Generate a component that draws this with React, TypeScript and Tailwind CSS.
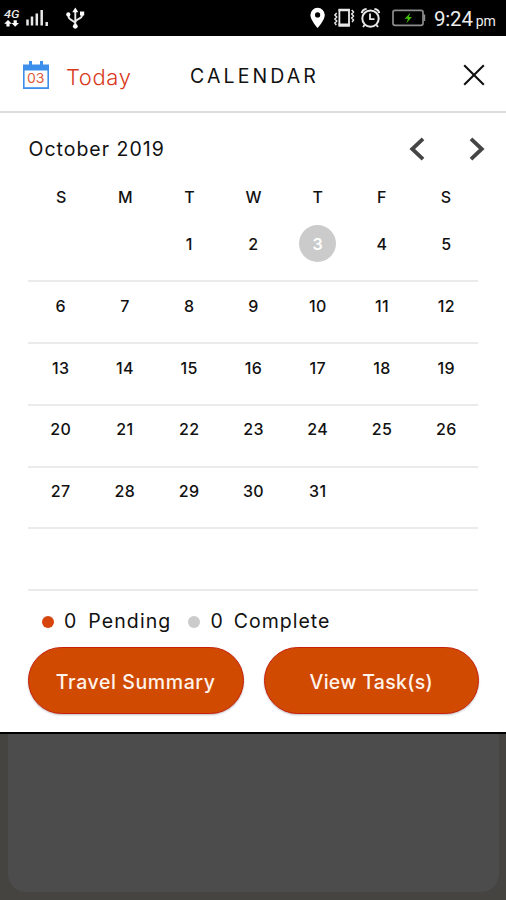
import clsx from 'clsx';

const WEEKDAYS = ['S', 'M', 'T', 'W', 'T', 'F', 'S'];

// October 2019 starts on a Tuesday; the grid always shows six weeks.
const FIRST_DAY = 2;
const DAYS_IN_MONTH = 31;
const SELECTED = 3;

const WEEKS = Array.from({ length: 6 }, (_, week) =>
  Array.from({ length: 7 }, (_, day) => {
    const n = week * 7 + day - FIRST_DAY + 1;
    return n > 0 && n <= DAYS_IN_MONTH ? n : null;
  }),
);

function StatusBar() {
  return (
    <div className="flex h-[35.5px] shrink-0 items-start justify-between bg-black text-white">
      <svg width="100" height="35" viewBox="0 0 100 35" fill="none" stroke="#e8e8e8">
        <text x="4" y="17.5" fontSize="11.5" fontWeight="500" fontStyle="italic" fill="#e8e8e8" stroke="none" textLength="15.5" lengthAdjust="spacingAndGlyphs" className="font-['Roboto',sans-serif]">
          4G
        </text>
        <path d="M8 20l3.8 3.8H9.6v2.8H6.4v-2.8H4.2zM15.2 26.8l3.8-3.8h-2.2v-2.8h-3.2V23h-2.2z" fill="#fff" stroke="none" />
        <path d="M27.5 19.5v6M32 16.5v9M36.8 13.5v12M41.7 10v15.5M46.7 22v4" strokeWidth="2.5" />
        <path d="M75.3 11v15M75.3 23.5c-1-4-7-2.5-7-8M75.3 22c1-4 7-2.5 7-7.5" strokeWidth="1.9" />
        <path d="M75.3 7.5l3 4.8h-6z" fill="#fff" stroke="none" />
        <circle cx="75.3" cy="26.3" r="2.4" fill="#fff" stroke="none" />
        <circle cx="68.3" cy="14.4" r="2.1" fill="#fff" stroke="none" />
        <path d="M80 11.5h4.2v4H80z" fill="#fff" stroke="none" />
      </svg>
      <div className="flex items-start">
        <svg width="124" height="35" viewBox="306 0 124 35" fill="none" stroke="#e8e8e8">
          <path d="M317.6 7.8a7.2 7.2 0 0 0-7.2 7.2c0 5 7.2 13 7.2 13s7.2-8 7.2-13a7.2 7.2 0 0 0-7.2-7.2zm0 4.5a2.6 2.6 0 1 1 0 5.2 2.6 2.6 0 0 1 0-5.2z" fill="#fff" stroke="none" />
          <path d="M339.4 10.2h9.6v15.6h-9.6z" strokeWidth="1.8" />
          <path d="M338.5 10h11.4M338.5 24.6h11.4" strokeWidth="2.4" />
          <path d="M336.7 13l-1.8 2 1.8 2-1.8 2 1.8 2-1.8 2 1.4 2M351.7 10l1.8 2-1.8 2 1.8 2-1.8 2 1.8 2-1.4 2" strokeWidth="1.5" />
          <circle cx="370.5" cy="18.6" r="8.2" strokeWidth="2" />
          <path d="M370 13.5v5.7h4.5" strokeWidth="1.8" />
          <path d="M361.8 13.2c.3-2.2 2.2-4 4.8-4.2M379.2 13.2c-.3-2.2-2.2-4-4.8-4.2M364.6 25l-1.6 2M376.4 25l1.6 2" strokeWidth="2" />
          <rect x="393" y="10.3" width="30" height="15" rx="2" stroke="#8c8c8c" strokeWidth="1.7" />
          <path d="M424.3 14.5v6.5" stroke="#8c8c8c" strokeWidth="1.8" />
          <path d="M410.5 12.8l-5.8 6h3.3l-1.6 4.4 5.5-6.2h-3.2z" fill="#3fc500" stroke="none" />
        </svg>
        <p className="w-[76px] pt-[4px] pl-[4px] font-['Roboto',sans-serif] text-[20.5px] leading-[30px] whitespace-nowrap text-[#ededed]">
          <span className="tracking-[-0.2px]">9:24</span>
          <span className="ml-[3px] text-[14px]">pm</span>
        </p>
      </div>
    </div>
  );
}

function CalendarIcon() {
  return (
    <svg width="28" height="30" viewBox="0 0 28 30" className="shrink-0">
      <path d="M1 4.5h26v24.5H1z" fill="#3c8fea" />
      <path d="M7 1h3v5H7zM18 1h3v5h-3z" fill="#3c8fea" />
      <path d="M2.6 10.5h22.8v16.7H2.6z" fill="#fff" />
      <text x="5" y="22.5" fontSize="13.5" fill="#dd5a3c" textLength="17.5" lengthAdjust="spacingAndGlyphs" className="font-['Inter',sans-serif]">
        03
      </text>
    </svg>
  );
}

function Header() {
  return (
    <header className="flex h-[77px] shrink-0 items-center border-b-2 border-[#dcdcdc] pt-[3px] pr-[21px] pl-[22px]">
      <button type="button" className="flex w-[168px] items-center">
        <CalendarIcon />
        <span className="ml-[16px] pt-[4px] text-[22px] leading-none font-light tracking-[0.6px] text-[#d93a1e]">Today</span>
      </button>
      <h1 className="pt-[4px] text-[19.5px] leading-none tracking-[3.1px]">CALENDAR</h1>
      <button type="button" aria-label="Close" className="ml-auto">
        <svg width="22" height="22" viewBox="0 0 22 22" stroke="#111" strokeWidth="2.1">
          <path d="M1.2 1.2l19.6 19.6M20.8 1.2L1.2 20.8" />
        </svg>
      </button>
    </header>
  );
}

function MonthNav() {
  return (
    <div className="flex h-[74px] items-center justify-between pr-[21.5px] pb-[2px] pl-[28.5px]">
      <h2 className="pt-[3px] text-[19.5px] tracking-[1px]">October 2019</h2>
      <div className="flex gap-[44px]">
        <button type="button" aria-label="Previous month">
          <svg width="16" height="24" viewBox="0 0 16 24" fill="none" stroke="#454545" strokeWidth="3.8">
            <path d="M14 1.8L3.2 12 14 22.2" />
          </svg>
        </button>
        <button type="button" aria-label="Next month">
          <svg width="16" height="24" viewBox="0 0 16 24" fill="none" stroke="#454545" strokeWidth="3.8">
            <path d="M2 1.8L12.8 12 2 22.2" />
          </svg>
        </button>
      </div>
    </div>
  );
}

function MonthGrid() {
  return (
    <div className="mx-7">
      <div className="grid h-[34px] grid-cols-7 pl-px text-center text-base leading-[20px] font-medium">
        {WEEKDAYS.map((d, i) => (
          <span key={i}>{d}</span>
        ))}
      </div>
      {WEEKS.map((week, i) => (
        <div key={i} className="grid h-[61.8px] grid-cols-7 justify-items-center border-b-2 border-[#ebebeb] pt-[4px]">
          {week.map((day, j) => (
            <span
              key={j}
              className={clsx(
                'flex size-[37px] items-center justify-center rounded-full pt-[2px] pl-px text-base font-medium tracking-[0.4px]',
                day === SELECTED && 'bg-[#cbcbcb] font-semibold text-white',
              )}
            >
              {day}
            </span>
          ))}
        </div>
      ))}
    </div>
  );
}

function Legend() {
  return (
    <div className="flex h-[56px] items-center pt-[5px] pl-[42px] text-[19.5px]">
      <span className="size-3 rounded-full bg-[#d6460c]" />
      <span className="ml-[10px]">0</span>
      <span className="ml-[12px] tracking-[1.1px]">Pending</span>
      <span className="ml-[17px] size-3 rounded-full bg-[#cbcbcb]" />
      <span className="ml-[10px]">0</span>
      <span className="ml-[11px] tracking-[1px]">Complete</span>
    </div>
  );
}

const actionButton =
  'h-[67px] flex-1 rounded-full border border-[#c9200a] bg-[#d04a02] pt-[4px] text-[19.5px] font-medium text-[#fff3ec] shadow-[0_1px_2px_rgba(0,0,0,0.25)]';

export default function App() {
  return (
    <div className="flex h-[900px] w-[506px] flex-col overflow-hidden bg-[#464441] font-['Inter',sans-serif] text-[#111]">
      <StatusBar />
      <div className="h-[696px] shrink-0 bg-white">
        <Header />
        <MonthNav />
        <MonthGrid />
        <Legend />
        <div className="flex gap-5 pr-[27px] pl-7">
          <button type="button" className={clsx(actionButton, 'tracking-[0.6px]')}>Travel Summary</button>
          <button type="button" className={clsx(actionButton, 'tracking-[0.3px]')}>View Task(s)</button>
        </div>
      </div>
      <div className="flex-1 border-t-2 border-black pr-[7px] pb-[8px] pl-[8px]">
        <div className="h-full rounded-b-[18px] bg-[#4c4c4c]" />
      </div>
    </div>
  );
}
